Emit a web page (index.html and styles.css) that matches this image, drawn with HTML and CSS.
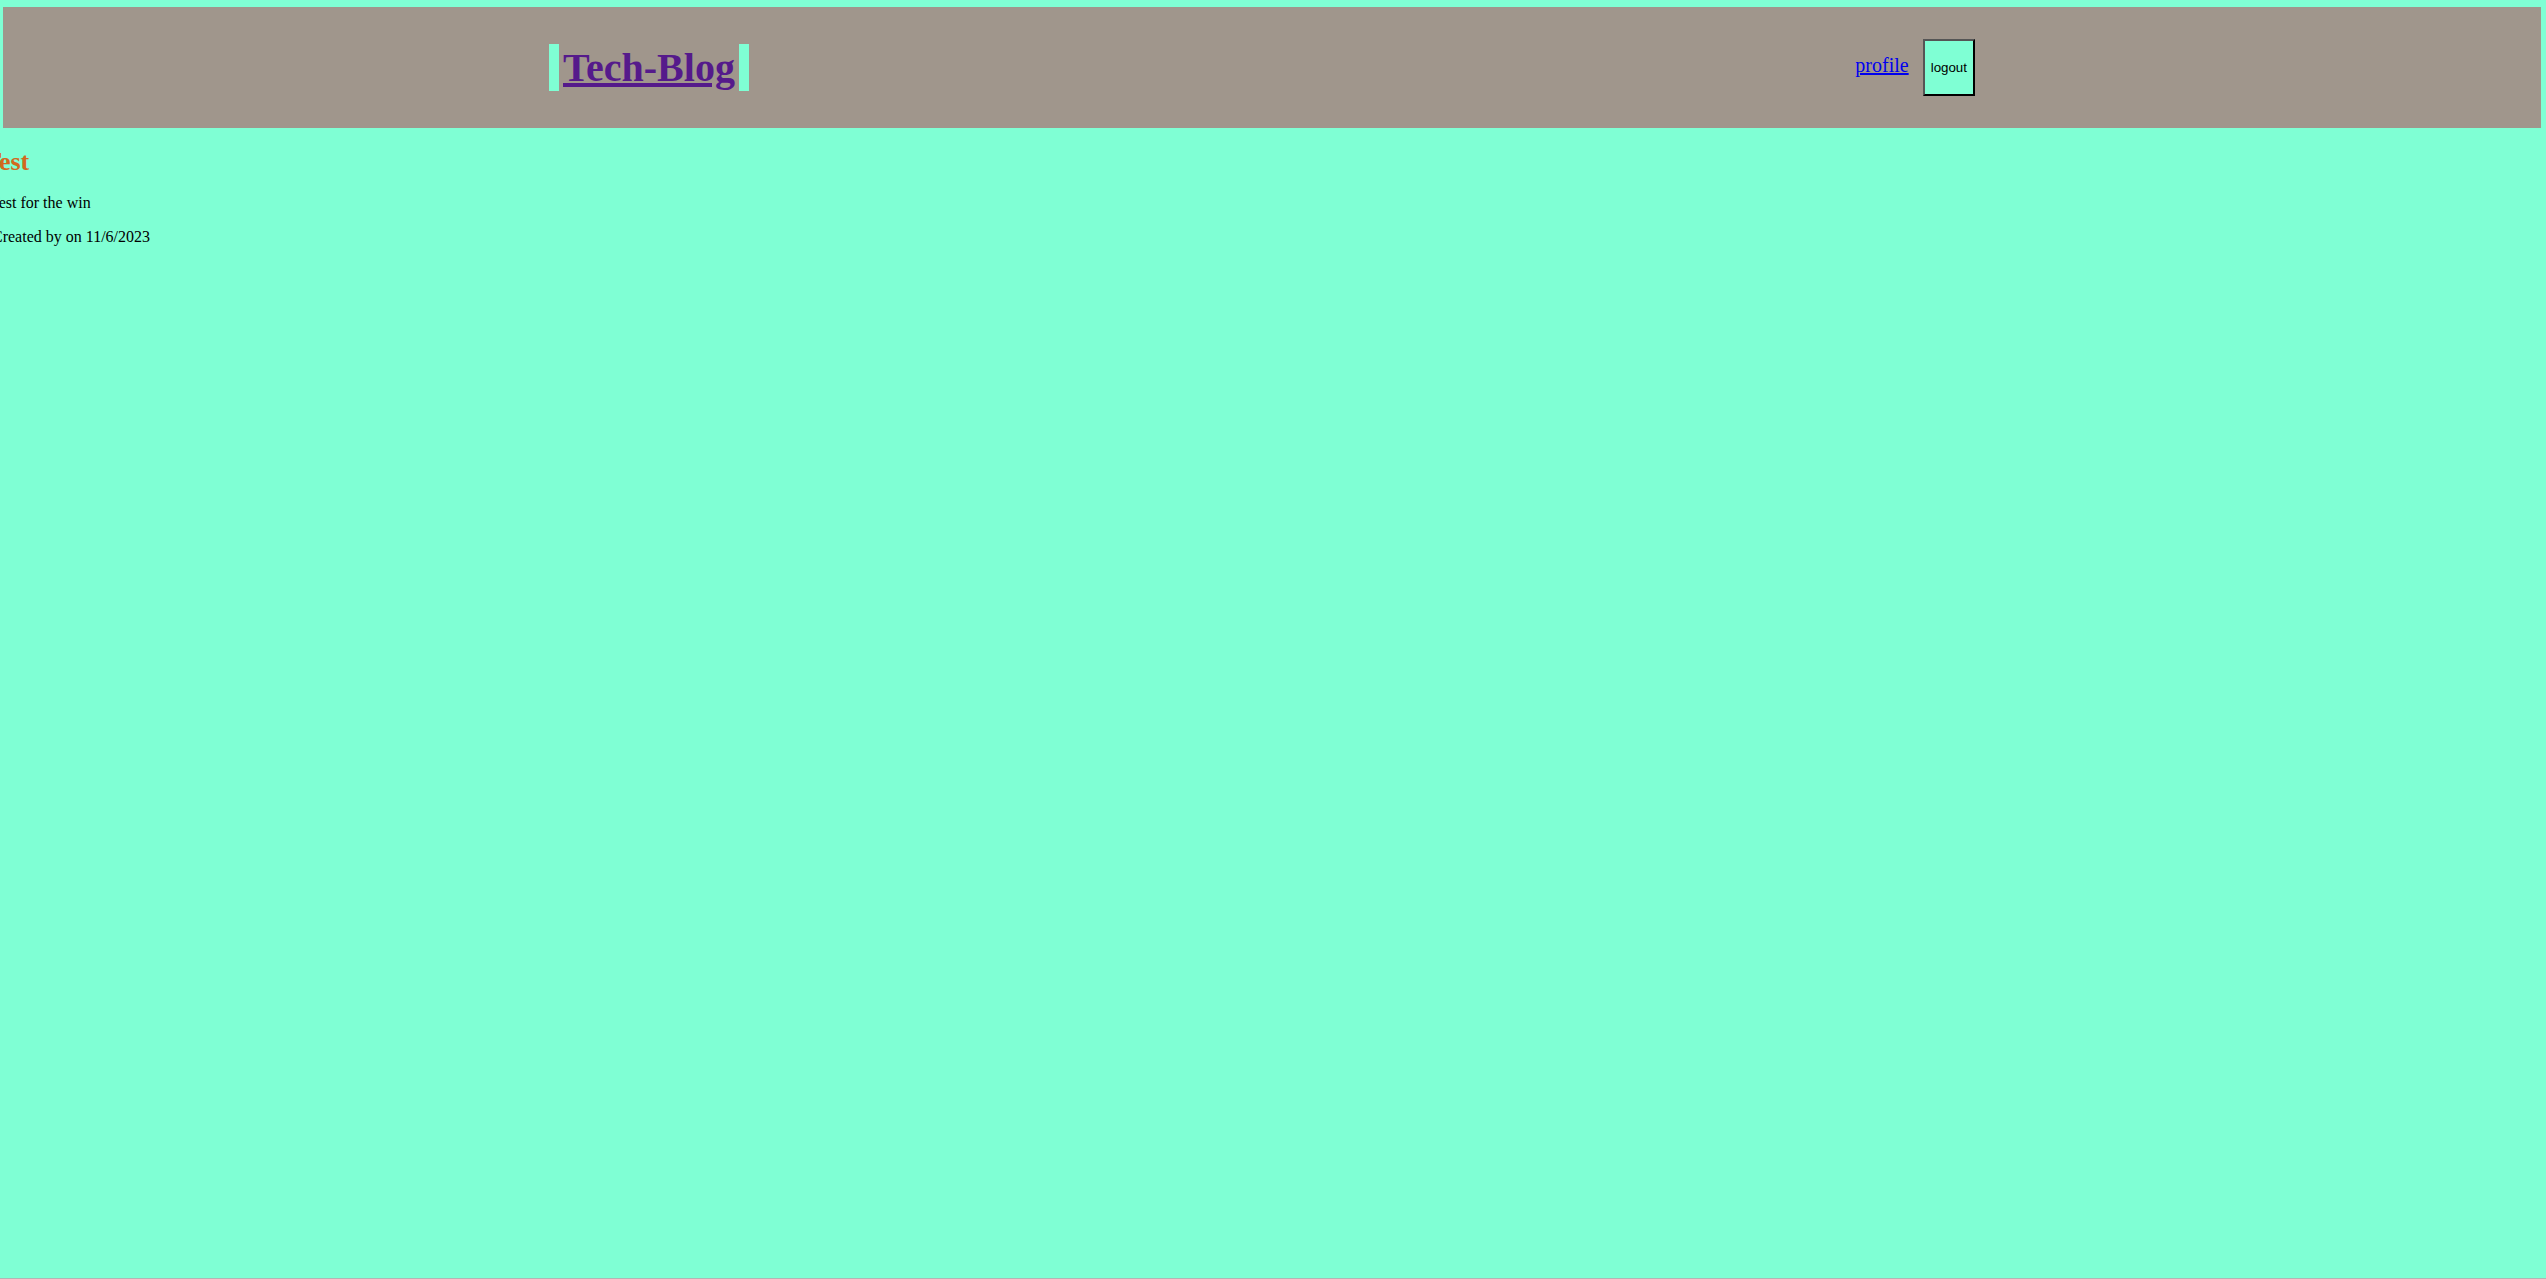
FILE: index.html
```html
<!DOCTYPE html>
<html lang="en">
<head>
<meta charset="utf-8">
<title>Tech-Blog</title>
<link rel="stylesheet" href="styles.css">
</head>
<body>
<header class="site-header">
  <h1 class="brand"><a class="brand-link" href="#">Tech-Blog</a></h1>
  <nav class="nav">
    <a class="nav-link" href="#">profile</a>
    <button class="logout" type="button">logout</button>
  </nav>
</header>
<main class="posts">
  <article class="post">
    <h2 class="post-title">Test</h2>
    <p class="post-body">Test for the win</p>
    <p class="post-meta">Created by on 11/6/2023</p>
  </article>
</main>
<div class="frame-edge"></div>
</body>
</html>
```
FILE: styles.css
```css
html, body {
  margin: 0;
  padding: 0;
  background: #7fffd4;
  font-family: "Liberation Serif", "Times New Roman", serif;
  overflow: hidden;
}

.site-header {
  margin: 7px 5px 0 3px;
  height: 121px;
  background: #a0968c;
  display: flex;
  align-items: center;
  padding: 0 566px 0 546px;
}

.brand {
  margin: 0;
  font-size: 40px;
  font-weight: bold;
  line-height: normal;
  border-left: 10px solid #7fffd4;
  border-right: 10px solid #7fffd4;
  padding: 0 4px;
}

.brand-link {
  color: #551a8b;
  text-decoration: underline;
}

.nav {
  margin-left: auto;
  display: flex;
  align-items: baseline;
  gap: 14px;
}

.nav-link {
  color: #0000ee;
  font-size: 20px;
}

.logout {
  background: #7fffd4;
  font-family: "Liberation Sans", Arial, sans-serif;
  font-size: 13.333px;
  color: #000;
  padding: 19px 6px;
  border-width: 2px;
  border-style: solid;
  border-color: #555 #000 #000 #555;
}

.posts {
  margin-left: -8px;
}

.post-title {
  color: #d2691e;
  font-size: 26px;
  margin: 19px 0 0 -8px;
}

.post-body,
.post-meta {
  font-size: 16px;
  margin: 16px 0;
}

.post-body {
  margin-top: 17px;
  margin-left: -2px;
}

.frame-edge {
  position: fixed;
  left: 0;
  right: 0;
  bottom: 0;
  height: 1px;
  background: #b4b4b4;
}
```
